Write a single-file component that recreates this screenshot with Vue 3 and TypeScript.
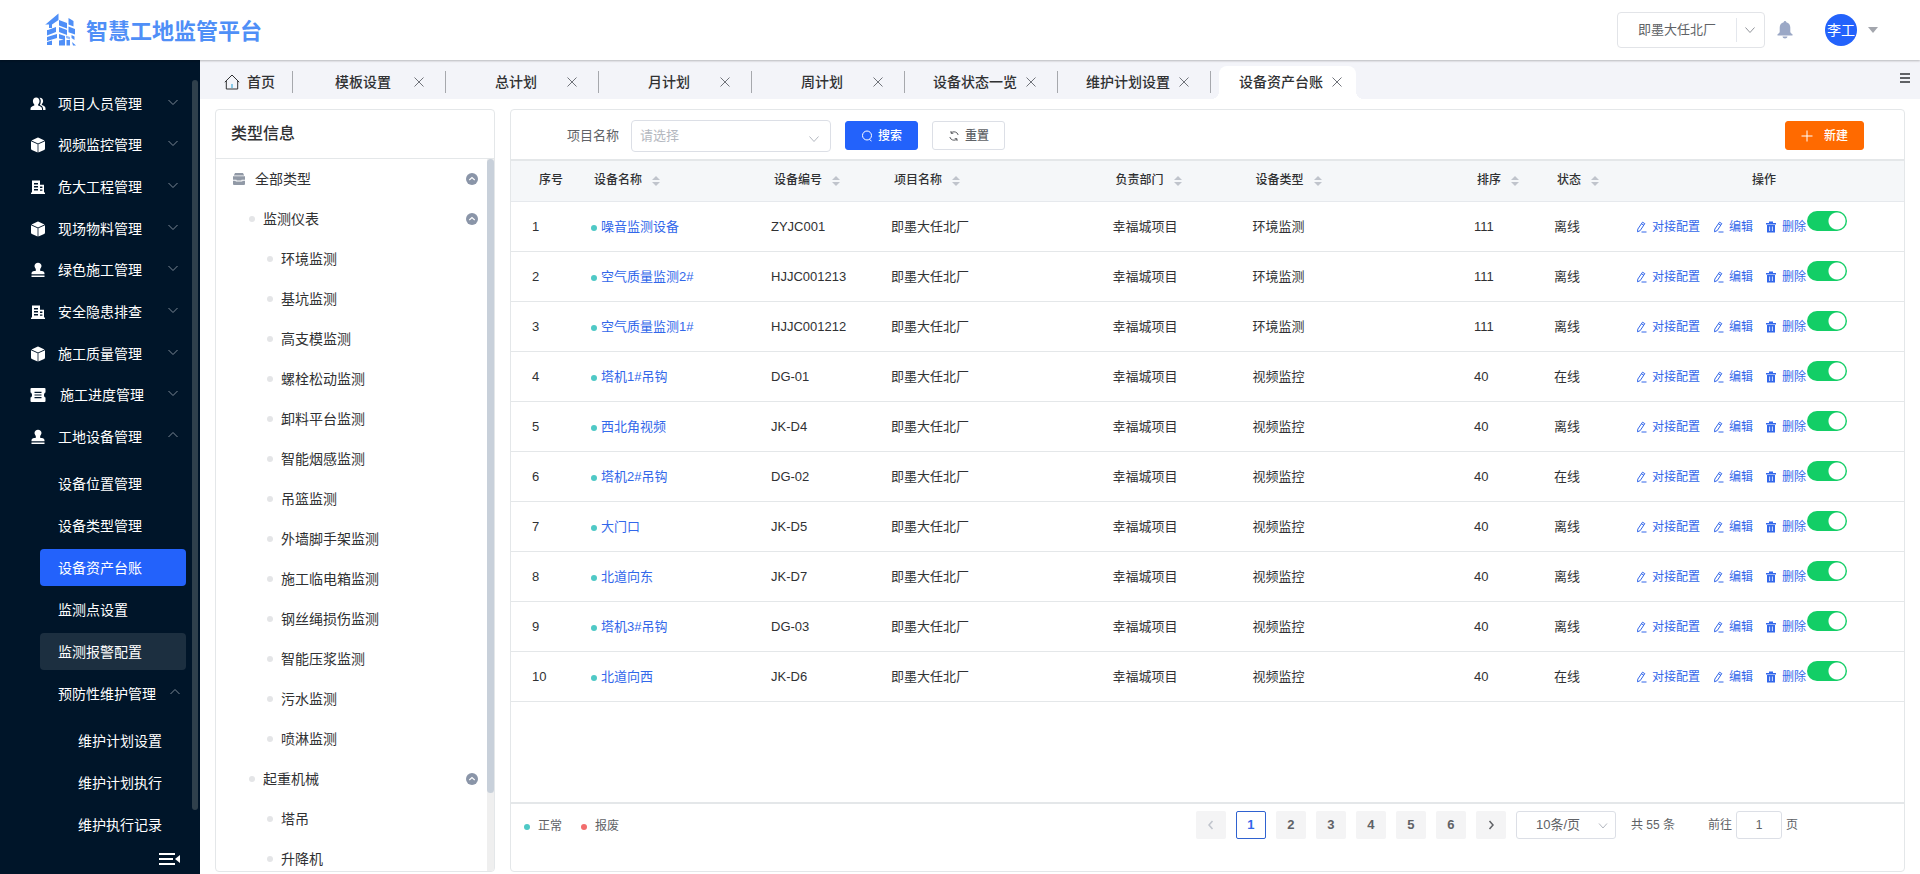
<script setup lang="ts">
import { ref } from 'vue'

type IconName = 'users' | 'cube' | 'building' | 'stamp' | 'ticket'

interface MenuItem {
  label: string
  icon: IconName
  open?: boolean
}

interface TreeNode {
  label: string
  level: 1 | 2 | 3
}

interface Device {
  name: string
  code: string
  type: string
  order: number
  status: string
  enabled: boolean
}

const menu: MenuItem[] = [
  { label: '项目人员管理', icon: 'users' },
  { label: '视频监控管理', icon: 'cube' },
  { label: '危大工程管理', icon: 'building' },
  { label: '现场物料管理', icon: 'cube' },
  { label: '绿色施工管理', icon: 'stamp' },
  { label: '安全隐患排查', icon: 'building' },
  { label: '施工质量管理', icon: 'cube' },
  { label: '施工进度管理', icon: 'ticket' },
  { label: '工地设备管理', icon: 'stamp', open: true },
]

const icons: Record<IconName, string> = {
  users:
    'M6.2 1.5c2 0 3.300 1.500 3.300 3.600 0 1.400-.6 2.700-1.400 3.400v1c2 .7 3.900 1.500 3.900 3.300v1.200H.5v-1.200c0-1.800 1.900-2.600 3.800-3.300v-1C3.500 7.800 2.900 6.500 2.900 5.100c0-2.100 1.300-3.600 3.300-3.600zM10 1.700c2 0 3.100 1.400 3.100 3.300 0 1.300-.5 2.500-1.300 3.200v.9c1.900.7 3.700 1.500 3.700 3.300V14h-2.400v-1.300c0-2-1.700-3-3.300-3.700.6-1 1-2.400 1-3.900 0-1.400-.5-2.600-1.300-3.400z',
  cube: 'M7.300.8a1.500 1.500 0 011.400 0l5.800 2.700L8 6.600 1.500 3.500zM1 4.200l6.600 3.100v8.200L1.900 12.900c-.6-.3-.9-.8-.9-1.500zM15 4.200v7.200c0 .7-.3 1.200-.9 1.500l-5.700 2.600V7.300z',
  building:
    'M2 1.500h8v4.300h4v7.700h1V15H1v-1.500h1zM4 4v1.400h4V4zM4 7v1.400h4V7zM4 10v1.400h4V10zM10 7.600V9h2.400V7.600zM10 10.400v1.400h2.400v-1.400z',
  stamp:
    'M8 .8c2 0 3.500 1.400 3.500 3.300 0 1.500-1.400 2.400-1.400 3.800 0 .9.600 1.100 1.700 1.200 1.700.1 2.700.9 2.700 2.500v.6h-13v-.6c0-1.600 1-2.400 2.700-2.500 1.100-.1 1.700-.3 1.700-1.200 0-1.400-1.400-2.300-1.400-3.800C4.500 2.200 6 .8 8 .8zM1.500 13.600h13V15h-13z',
  ticket:
    'M1.500 1h13a1 1 0 011 1v3.400c-1 .2-1.500 1.300-1.500 2.600s.5 2.400 1.500 2.600V14a1 1 0 01-1 1h-13a1 1 0 01-1-1v-3.400c1-.2 1.500-1.300 1.500-2.600S1.500 5.600.5 5.400V2a1 1 0 011-1zM4.500 4.800V6h7V4.800zM4.500 7.400v1.200h7V7.400zM4.500 10v1.200h7V10z',
}

const subMenu = ['设备位置管理', '设备类型管理', '设备资产台账', '监测点设置', '监测报警配置']
const nestedMenu = ['维护计划设置', '维护计划执行', '维护执行记录']

const tabs = ['模板设置', '总计划', '月计划', '周计划', '设备状态一览', '维护计划设置']

const tree: TreeNode[] = [
  { label: '全部类型', level: 1 },
  { label: '监测仪表', level: 2 },
  { label: '环境监测', level: 3 },
  { label: '基坑监测', level: 3 },
  { label: '高支模监测', level: 3 },
  { label: '螺栓松动监测', level: 3 },
  { label: '卸料平台监测', level: 3 },
  { label: '智能烟感监测', level: 3 },
  { label: '吊篮监测', level: 3 },
  { label: '外墙脚手架监测', level: 3 },
  { label: '施工临电箱监测', level: 3 },
  { label: '钢丝绳损伤监测', level: 3 },
  { label: '智能压浆监测', level: 3 },
  { label: '污水监测', level: 3 },
  { label: '喷淋监测', level: 3 },
  { label: '起重机械', level: 2 },
  { label: '塔吊', level: 3 },
  { label: '升降机', level: 3 },
]

const sortable = ['设备名称', '设备编号', '项目名称', '负责部门', '设备类型', '排序', '状态']

const env = '环境监测'
const video = '视频监控'
const devices = ref<Device[]>([
  { name: '噪音监测设备', code: 'ZYJC001', type: env, order: 111, status: '离线', enabled: true },
  { name: '空气质量监测2#', code: 'HJJC001213', type: env, order: 111, status: '离线', enabled: true },
  { name: '空气质量监测1#', code: 'HJJC001212', type: env, order: 111, status: '离线', enabled: true },
  { name: '塔机1#吊钩', code: 'DG-01', type: video, order: 40, status: '在线', enabled: true },
  { name: '西北角视频', code: 'JK-D4', type: video, order: 40, status: '离线', enabled: true },
  { name: '塔机2#吊钩', code: 'DG-02', type: video, order: 40, status: '在线', enabled: true },
  { name: '大门口', code: 'JK-D5', type: video, order: 40, status: '离线', enabled: true },
  { name: '北道向东', code: 'JK-D7', type: video, order: 40, status: '离线', enabled: true },
  { name: '塔机3#吊钩', code: 'DG-03', type: video, order: 40, status: '离线', enabled: true },
  { name: '北道向西', code: 'JK-D6', type: video, order: 40, status: '在线', enabled: true },
])

const page = ref(1)
const jump = ref('1')
</script>

<template>
  <div class="app">
    <header class="top">
      <div class="brand">
        <svg class="logo" viewBox="0 0 34 34" aria-hidden="true">
          <path d="M2 11L14.500 .5v6.500L8 11.500v3.500H5v-3.500H1zM4 17l8-3v5l-9 3.500V17zM3 24l10-3v4L3 28zM3 29l5-1.500V32H3z" />
          <path d="M15 7l8 3v5.500l-8-3zM24.500 5l5 3v5.500l-5-2zM15 14l8 3v5l-8-3zM24.500 13.500L31 16v5.500l-6.500-2.300zM15 21l6 2v4l-6-1.500zM15 27.500l6-1v6h-6zM22.500 27h3.500v5.500h-3.500zM27.500 22l3 1.500V27l-3-2zM28 29l4 3.500h-3z" />
          <path d="M22 22.500l4 1.500v2.500l-4-1.500z" opacity=".6" />
        </svg>
        <h1>智慧工地监管平台</h1>
      </div>
      <div class="top-tools">
        <div class="project">
          <select aria-label="项目">
            <option>即墨大任北厂</option>
          </select>
          <svg viewBox="0 0 10 10" aria-hidden="true"><path d="M.5 2.500L5 7.500l4.500-5" /></svg>
        </div>
        <button class="bell" type="button" aria-label="通知">
          <svg viewBox="0 0 16 18" aria-hidden="true">
            <path d="M8 0c.8 0 1.300.6 1.300 1.300 2.500.6 4 2.600 4 5.200v4.300c0 1 1 1.800 2.200 2.400V14.500H.5v-1.300c1.200-.6 2.200-1.400 2.200-2.400V6.500c0-2.600 1.500-4.600 4-5.200C6.700.6 7.200 0 8 0zM5.500 15.500h5C10.300 16.800 9.300 17.500 8 17.500s-2.300-.7-2.500-2z" />
          </svg>
        </button>
        <button class="user" type="button">
          <span class="avatar">李工</span>
          <svg viewBox="0 0 10 6" aria-hidden="true"><path d="M0 0h10L5 6z" /></svg>
        </button>
      </div>
    </header>

    <div class="body">
      <aside class="side">
        <nav class="menu">
          <ul class="roots">
            <li v-for="m in menu" :key="m.label">
              <a href="#" :class="{ wide: m.icon === 'ticket' }">
                <svg class="m-icon" viewBox="0 0 16 16" aria-hidden="true"><path fill-rule="evenodd" :d="icons[m.icon]" /></svg>
                <span>{{ m.label }}</span>
                <svg class="arrow" viewBox="0 0 10 10" aria-hidden="true">
                  <path :d="m.open ? 'M.5 7L5 2.500 9.500 7' : 'M.5 3L5 7.500 9.500 3'" />
                </svg>
              </a>
            </li>
          </ul>
          <ul class="subs">
            <li v-for="(s, i) in subMenu" :key="s">
              <a href="#" :class="{ active: i === 2, hover: i === 4 }">{{ s }}</a>
            </li>
            <li>
              <a href="#">
                <span>预防性维护管理</span>
                <svg class="arrow" viewBox="0 0 10 10" aria-hidden="true"><path d="M.5 7L5 2.500 9.500 7" /></svg>
              </a>
              <ul class="nested">
                <li v-for="n in nestedMenu" :key="n"><a href="#">{{ n }}</a></li>
              </ul>
            </li>
          </ul>
        </nav>
        <i class="side-thumb"></i>
        <button class="fold" type="button" aria-label="收起菜单">
          <svg viewBox="0 0 21 12" aria-hidden="true"><path d="M0 0h16v2H0zM0 5h14v2H0zM0 10h16v2H0zM21 2v8l-5-4z" /></svg>
        </button>
      </aside>

      <main class="main">
        <div class="tabs">
          <a class="home" href="#">
            <svg viewBox="0 0 16 16" aria-hidden="true">
              <path d="M.8 8.200L8 1l7.200 7.200M2.300 7v8h11.400V7" />
              <path class="door" d="M8 10v4" />
            </svg>
            <span>首页</span>
          </a>
          <div v-for="t in tabs" :key="t" class="tab">
            <a href="#">{{ t }}</a>
            <button type="button" :aria-label="'关闭' + t"><svg viewBox="0 0 10 10"><path d="M.5.5l9 9M9.500.5l-9 9" /></svg></button>
          </div>
          <div class="tab current">
            <a href="#">设备资产台账</a>
            <button type="button" aria-label="关闭设备资产台账"><svg viewBox="0 0 10 10"><path d="M.5.5l9 9M9.500.5l-9 9" /></svg></button>
          </div>
          <button class="more" type="button" aria-label="更多">
            <svg viewBox="0 0 10 10"><path d="M0 0h10v2H0zM0 4h10v2H0zM0 8h10v2H0z" /></svg>
          </button>
        </div>

        <div class="content">
          <section class="card types">
            <h2>类型信息</h2>
            <div class="tree-wrap">
              <ul class="tree">
                <li v-for="n in tree" :key="n.label" :class="'lv' + n.level">
                  <svg v-if="n.level === 1" class="box" viewBox="0 0 12 12" aria-hidden="true">
                    <path d="M2 0h8l1.200 2.500H.8zM0 3.300h12v3.400H8.500v.8h-5v-.8H0zM0 7.700h2.700v.8h6.600v-.8H12V11a1 1 0 01-1 1H1a1 1 0 01-1-1z" />
                  </svg>
                  <i v-else class="dot"></i>
                  <span>{{ n.label }}</span>
                  <button v-if="n.level < 3" type="button" :aria-label="'收起' + n.label">
                    <svg viewBox="0 0 12 12"><circle cx="6" cy="6" r="6" /><path d="M3.300 7L6 4.600 8.700 7" /></svg>
                  </button>
                </li>
              </ul>
              <div class="track"><i></i></div>
            </div>
          </section>

          <section class="card devices">
            <form class="filter" @submit.prevent>
              <label for="project-name">项目名称</label>
              <div class="pick">
                <select id="project-name">
                  <option>请选择</option>
                </select>
                <svg viewBox="0 0 10 10" aria-hidden="true"><path d="M.5 2.500L5 7.500l4.500-5" /></svg>
              </div>
              <button class="btn primary" type="submit">
                <svg viewBox="0 0 12 12" aria-hidden="true"><circle cx="6" cy="5.500" r="4.500" /><path d="M8.500 9.500l2 1.500" /></svg>搜索
              </button>
              <button class="btn" type="reset">
                <svg viewBox="0 0 12 12" aria-hidden="true"><path d="M10.200 5A4.300 4.300 0 003 3M1.800 7A4.300 4.300 0 009 9M3 1v2.300h2.300M9 11V8.700H6.700" /></svg>重置
              </button>
              <button class="btn create" type="button">
                <svg viewBox="0 0 12 12" aria-hidden="true"><path d="M6 .5v11M.5 6h11" /></svg>新建
              </button>
            </form>

            <div class="table-wrap">
              <table>
                <colgroup>
                  <col class="c-no" />
                  <col class="c-name" />
                  <col class="c-code" />
                  <col />
                  <col class="c-type" />
                  <col />
                  <col class="c-short" />
                  <col class="c-short" />
                  <col class="c-ops" />
                </colgroup>
                <thead>
                  <tr>
                    <th class="no">序号</th>
                    <th v-for="h in sortable" :key="h">
                      <span class="sort">{{ h }}<svg viewBox="0 0 8 10" aria-hidden="true"><path d="M4 0l4 4H0zM0 6h8l-4 4z" /></svg></span>
                    </th>
                    <th class="ops-head">操作</th>
                  </tr>
                </thead>
                <tbody>
                  <tr v-for="(d, i) in devices" :key="d.code">
                    <td class="no">{{ i + 1 }}</td>
                    <td><a class="name" href="#"><i></i>{{ d.name }}</a></td>
                    <td>{{ d.code }}</td>
                    <td>即墨大任北厂</td>
                    <td>幸福城项目</td>
                    <td>{{ d.type }}</td>
                    <td>{{ d.order }}</td>
                    <td>{{ d.status }}</td>
                    <td class="ops-cell">
                      <div class="ops">
                        <button v-for="o in ['对接配置', '编辑']" :key="o" type="button">
                          <svg class="pen" viewBox="0 0 12 12" aria-hidden="true"><path d="M7.500 1.200l2.300 1.400-4.600 7-2.700 1.200.3-2.700zM6.500 2.800l2.300 1.400M6.500 11h5" /></svg>{{ o }}
                        </button>
                        <button type="button">
                          <svg viewBox="0 0 12 12" aria-hidden="true"><path fill-rule="evenodd" d="M4 .5h4V2h3v1.500H1V2h3zM2 4h8v7.500H2zM4.300 5.500v4.500h.8V5.500zM6.900 5.500v4.500h.8V5.500z" /></svg>删除
                        </button>
                        <input v-model="d.enabled" type="checkbox" role="switch" :aria-label="d.name" />
                      </div>
                    </td>
                  </tr>
                </tbody>
              </table>
            </div>

            <footer class="foot">
              <div class="legend">
                <span><i class="ok"></i>正常</span>
                <span><i class="bad"></i>报废</span>
              </div>
              <div class="pager">
                <button type="button" disabled aria-label="上一页"><svg viewBox="0 0 10 10"><path d="M6.500 1L3 5l3.500 4" /></svg></button>
                <button v-for="p in 6" :key="p" type="button" :class="{ on: p === page }" @click="page = p">{{ p }}</button>
                <button type="button" aria-label="下一页"><svg viewBox="0 0 10 10"><path d="M3.500 1L7 5 3.500 9" /></svg></button>
                <div class="pick size">
                  <select aria-label="每页条数">
                    <option>10条/页</option>
                  </select>
                  <svg viewBox="0 0 10 10" aria-hidden="true"><path d="M1 2.500L5 7l4-4.500" /></svg>
                </div>
                <span class="total">共 55 条</span>
                <label class="jump">前往<input v-model="jump" type="text" />页</label>
              </div>
            </footer>
          </section>
        </div>
      </main>
    </div>
  </div>
</template>

<style>
body {
  margin: 0;
}
</style>

<style scoped>
* {
  box-sizing: border-box;
}
.app {
  display: flex;
  flex-direction: column;
  height: 100vh;
  overflow: hidden;
  background: #fff;
  color: #303133;
  font-family: 'Liberation Sans', 'Noto Sans CJK SC', sans-serif;
  font-size: 13px;
  line-height: 20px;
}
ul {
  margin: 0;
  padding: 0;
  list-style: none;
}
a {
  color: inherit;
  text-decoration: none;
}
button,
input,
select {
  margin: 0;
  font: inherit;
  color: inherit;
}
button {
  padding: 0;
  border: 0;
  background: none;
  cursor: pointer;
}
svg {
  display: block;
  flex: none;
}

.top {
  position: relative;
  z-index: 2;
  flex: none;
  display: flex;
  justify-content: space-between;
  align-items: center;
  height: 60px;
  padding: 0 42px 0 44px;
  background: #fff;
  box-shadow: 0 1px 2px rgba(0, 0, 0, 0.25);
}
.brand {
  display: flex;
  align-items: center;
  gap: 8px;
}
.logo {
  width: 34px;
  height: 34px;
  fill: #4f8ff7;
}
h1 {
  margin: 0;
  padding-top: 4px;
  color: #4f8ff7;
  font-size: 22px;
  line-height: 32px;
  font-weight: 700;
}
.top-tools {
  display: flex;
  align-items: center;
}
.project {
  position: relative;
  width: 148px;
}
.project select {
  display: block;
  width: 100%;
  height: 36px;
  padding: 0 0 0 20px;
  border: 1px solid #e2e4e8;
  border-radius: 4px;
  background: #fff;
  color: #606266;
  appearance: none;
}
.project::after {
  content: '';
  position: absolute;
  top: 6px;
  right: 28px;
  height: 24px;
  border-left: 1px solid #e4e7ed;
}
.project svg {
  position: absolute;
  top: 13px;
  right: 10px;
  width: 10px;
  height: 10px;
  fill: none;
  stroke: #909399;
  pointer-events: none;
}
.bell {
  margin-left: 12px;
}
.bell svg {
  width: 16px;
  height: 18px;
  fill: #9ba8c6;
}
.user {
  display: flex;
  align-items: center;
  gap: 11px;
  margin-left: 32px;
}
.avatar {
  width: 32px;
  height: 32px;
  border-radius: 50%;
  background: #2362fb;
  color: #fff;
  font-size: 14px;
  line-height: 32px;
}
.user svg {
  width: 10px;
  height: 6px;
  fill: #a3a6ad;
}

.body {
  flex: 1;
  display: flex;
  min-height: 0;
}
.side {
  position: relative;
  flex: none;
  display: flex;
  flex-direction: column;
  width: 200px;
  padding-top: 23px;
  background: #001529;
  color: #fff;
  font-size: 14px;
}
.menu {
  flex: 1;
  min-height: 0;
  overflow: hidden;
}
.menu a {
  display: flex;
  align-items: center;
}
.roots {
  display: grid;
  grid-auto-rows: 1fr;
  min-height: 375px;
}
.roots a {
  height: 100%;
  padding: 0 22px 0 30px;
  gap: 12px;
}
.roots .wide {
  gap: 14px;
}
.m-icon {
  width: 16px;
  height: 16px;
  fill: #fff;
}
.arrow {
  width: 10px;
  height: 10px;
  margin: 0 0 4px auto;
  fill: none;
  stroke: #7b8794;
}
.subs {
  padding: 7px 14px 0 40px;
}
.subs a {
  height: 37px;
  margin-bottom: 5px;
  padding: 0 6px 0 18px;
  border-radius: 4px;
}
.subs .active {
  background: #2362fb;
}
.subs .hover {
  background: #1c2f40;
}
.nested {
  padding-top: 5px;
}
.nested a {
  padding-left: 38px;
}
.side-thumb {
  position: absolute;
  top: 20px;
  right: 2px;
  width: 6px;
  height: 730px;
  border-radius: 3px;
  background: #2f404c;
}
.fold {
  flex: none;
  align-self: flex-end;
  padding: 7px 20px 9px;
}
.fold svg {
  width: 21px;
  height: 12px;
  fill: #fff;
}

.main {
  flex: 1;
  display: flex;
  flex-direction: column;
  min-width: 0;
}
.tabs {
  flex: none;
  display: flex;
  align-items: flex-end;
  height: 39px;
  background: #f3f4f9;
  font-size: 14px;
  font-weight: 500;
}
.home,
.tab {
  position: relative;
  display: flex;
  align-items: center;
  height: 33px;
  padding-bottom: 1px;
}
.home {
  gap: 7px;
  width: 93px;
  padding-left: 24px;
}
.home svg {
  width: 16px;
  height: 16px;
  fill: none;
  stroke: #303133;
}
.home .door {
  stroke: #1fa0d8;
}
.tab {
  gap: 1px;
  width: 153px;
  padding-left: 23px;
}
.home::after,
.tab:not(.current)::after {
  content: '';
  position: absolute;
  top: 5px;
  right: 0;
  height: 22px;
  border-right: 1px solid #a6a8ad;
}
.tab a {
  width: 94px;
  text-align: center;
  white-space: nowrap;
}
.tab button {
  padding: 3px;
}
.tab svg {
  width: 10px;
  height: 10px;
  fill: none;
  stroke: #70737a;
}
.current {
  width: 137px;
  margin-left: 8px;
  padding-left: 15px;
  border-radius: 8px 8px 0 0;
  background: #fff;
}
.current::before,
.current::after {
  content: '';
  position: absolute;
  bottom: 0;
  width: 8px;
  height: 8px;
}
.current::before {
  right: 100%;
  background: radial-gradient(circle at 0 0, transparent 8px, #fff 8px);
}
.current::after {
  left: 100%;
  background: radial-gradient(circle at 100% 0, transparent 8px, #fff 8px);
}
.more {
  align-self: center;
  margin: 0 10px 3px auto;
}
.more svg {
  width: 10px;
  height: 10px;
  fill: #606266;
}

.content {
  flex: 1;
  display: flex;
  gap: 15px;
  min-height: 0;
  padding: 10px 15px 2px;
}
.card {
  display: flex;
  flex-direction: column;
  border: 1px solid #e4e7e9;
  border-radius: 4px;
  overflow: hidden;
}
.types {
  flex: none;
  width: 280px;
}
h2 {
  flex: none;
  margin: 0;
  padding: 12px 15px;
  border-bottom: 1px solid #e4e7e9;
  font-size: 16px;
  line-height: 24px;
  font-weight: 500;
}
.tree-wrap {
  flex: 1;
  display: flex;
  min-height: 0;
}
.tree {
  flex: 1;
  overflow: hidden;
  font-size: 14px;
}
.tree li {
  display: flex;
  align-items: center;
  height: 40px;
  padding-right: 9px;
}
.tree button {
  margin-left: auto;
}
.tree button svg {
  width: 12px;
  height: 12px;
  fill: #8a95a8;
}
.tree button path {
  fill: none;
  stroke: #fff;
  stroke-width: 1.2;
}
.box {
  width: 12px;
  height: 12px;
  fill: #9199a6;
}
.lv1 {
  gap: 10px;
  padding-left: 17px;
}
.lv2 {
  gap: 8px;
  padding-left: 33px;
}
.lv3 {
  gap: 8px;
  padding-left: 51px;
}
.dot {
  width: 6px;
  height: 6px;
  border-radius: 50%;
  background: #e4e5e7;
}
.track {
  flex: none;
  width: 7px;
  background: #efefef;
}
.track i {
  display: block;
  height: 89%;
  border-radius: 4px;
  background: #c8d0da;
}

.devices {
  flex: 1;
  min-width: 0;
}
.filter {
  flex: none;
  display: flex;
  align-items: center;
  height: 49px;
  padding: 2px 40px 0 56px;
}
.filter label {
  margin-right: 12px;
  color: #606266;
}
.pick {
  position: relative;
  width: 200px;
  margin-right: 14px;
}
.pick select {
  display: block;
  width: 100%;
  height: 32px;
  padding: 0 8px;
  border: 1px solid #dcdfe6;
  border-radius: 4px;
  background: #fff;
  color: #b4b8c0;
  appearance: none;
}
.pick svg {
  position: absolute;
  top: 14px;
  right: 12px;
  width: 10px;
  height: 10px;
  fill: none;
  stroke: #b4b8c0;
  pointer-events: none;
}
.btn {
  display: flex;
  align-items: center;
  gap: 5px;
  height: 29px;
  margin-right: 14px;
  padding: 0 15px;
  border: 1px solid #dcdfe6;
  border-radius: 3px;
  color: #606266;
  font-size: 12px;
  font-weight: 500;
}
.btn svg {
  width: 12px;
  height: 12px;
  fill: none;
  stroke: currentColor;
}
.primary {
  border-color: #2362fb;
  background: #2362fb;
  color: #fff;
}
.create {
  gap: 11px;
  margin: 0 0 0 auto;
  border-color: #ff6a00;
  background: #ff6a00;
  color: #fff;
}

.table-wrap {
  flex: 1;
  min-height: 0;
  overflow: hidden;
  border-top: 2px solid #e4e7e9;
}
table {
  width: 100%;
  table-layout: fixed;
  border-collapse: separate;
  border-spacing: 0;
}
.c-no {
  width: 70px;
}
.c-name {
  width: 180px;
}
.c-code {
  width: 120px;
}
.c-type {
  width: 140px;
}
.c-short {
  width: 80px;
}
.c-ops {
  width: 280px;
}
th {
  height: 41px;
  padding: 0 0 2px 13px;
  border-bottom: 1px solid #e6e9ed;
  background: #f5f7f9;
  font-size: 12px;
  font-weight: 500;
  text-align: left;
}
th.no {
  padding-left: 28px;
}
th.ops-head {
  padding-left: 0;
  text-align: center;
}
.sort {
  display: flex;
  align-items: center;
  gap: 10px;
}
.sort svg {
  width: 8px;
  height: 10px;
  margin-top: 2px;
  fill: #c0c4cc;
}
td {
  height: 50px;
  padding: 0 0 0 10px;
  border-bottom: 1px solid #e4e7e9;
  white-space: nowrap;
}
td.no {
  padding-left: 21px;
}
.name {
  display: flex;
  align-items: center;
  gap: 4px;
  color: #3267ea;
}
.name i {
  width: 6px;
  height: 6px;
  margin-top: 3px;
  border-radius: 50%;
  background: #4fc9c6;
}
td.ops-cell {
  padding-left: 11px;
}
.ops {
  display: flex;
  align-items: center;
  height: 32px;
  color: #3267ea;
  font-size: 12px;
}
.ops button {
  display: flex;
  align-items: center;
  gap: 5px;
  margin-right: 12px;
}
.ops button:last-of-type {
  margin-right: 1px;
}
.ops svg {
  width: 12px;
  height: 12px;
  fill: currentColor;
}
.ops .pen {
  fill: none;
  stroke: currentColor;
}
.ops input {
  flex: none;
  align-self: flex-start;
  width: 40px;
  height: 20px;
  border-radius: 10px;
  background: radial-gradient(circle at 30px 10px, #fff 8px, transparent 9px) #13ce66;
  appearance: none;
  cursor: pointer;
}
.ops input:not(:checked) {
  background: radial-gradient(circle at 10px 10px, #fff 8px, transparent 9px) #dcdfe6;
}

.foot {
  flex: none;
  display: flex;
  justify-content: space-between;
  align-items: flex-start;
  height: 69px;
  padding: 7px 106px 0 13px;
  border-top: 2px solid #e4e7e9;
  color: #606266;
  font-size: 12px;
}
.legend {
  display: flex;
  gap: 19px;
  padding-top: 5px;
}
.legend span {
  display: flex;
  align-items: center;
  gap: 8px;
}
.legend i {
  width: 6px;
  height: 6px;
  margin-top: 2px;
  border-radius: 50%;
}
.ok {
  background: #4fc9c6;
}
.bad {
  background: #f26d6d;
}
.pager {
  display: flex;
  align-items: center;
  gap: 10px;
}
.pager button {
  display: flex;
  align-items: center;
  justify-content: center;
  width: 30px;
  height: 28px;
  border-radius: 2px;
  background: #f4f4f5;
  font-size: 13px;
  font-weight: 700;
}
.pager button svg {
  width: 10px;
  height: 10px;
  fill: none;
  stroke: #606266;
  stroke-width: 1.5;
}
.pager button:disabled svg {
  stroke: #c0c4cc;
}
.pager .on {
  border: 1px solid #2f62d0;
  background: #fff;
  color: #3267ea;
}
.size {
  width: 100px;
  margin: 0;
}
.size select {
  height: 28px;
  padding-left: 19px;
  border-radius: 3px;
  color: #606266;
  font-size: 13px;
}
.size svg {
  top: 10px;
  right: 8px;
}
.total {
  margin: 0 23px 0 5px;
}
.jump {
  display: flex;
  align-items: center;
  gap: 4px;
}
.jump input {
  width: 46px;
  height: 28px;
  padding: 0;
  border: 1px solid #dcdfe6;
  border-radius: 3px;
  text-align: center;
}
</style>
